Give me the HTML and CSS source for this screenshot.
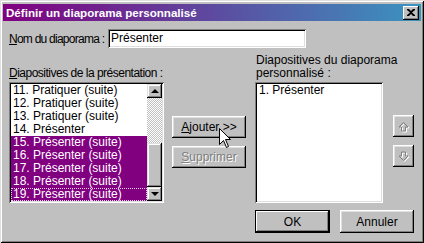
FILE: index.html
```html
<!DOCTYPE html>
<html lang="fr">
<head>
  <meta charset="UTF-8">
  <title>Définir un diaporama personnalisé</title>
  <link rel="stylesheet" href="styles.css">
</head>
<body>
  <div class="window">
    <div class="titlebar">
      <span class="title">Définir un diaporama personnalisé</span>
      <span class="close">
        <svg width="8" height="7" viewBox="0 0 8 7"><path d="M0 0h2l2 2 2-2h2v1L5 3.5 8 6v1H6L4 5 2 7H0V6l3-2.5L0 1z" fill="#000"/></svg>
      </span>
    </div>

    <div class="body">
      <div class="name-row">
        <span class="label"><u>N</u>om du diaporama :</span>
        <div class="field">Présenter</div>
      </div>

      <div class="main">
        <div class="lbl left-lbl"><u>D</u>iapositives de la présentation :</div>
        <div class="lbl right-lbl">Diapositives du diaporama<br>personnalisé :</div>

        <div class="listbox left-list">
          <ul class="items">
            <li>11. Pratiquer (suite)</li>
            <li>12. Pratiquer (suite)</li>
            <li>13. Pratiquer (suite)</li>
            <li>14. Présenter</li>
            <li class="sel">15. Présenter (suite)</li>
            <li class="sel">16. Présenter (suite)</li>
            <li class="sel">17. Présenter (suite)</li>
            <li class="sel">18. Présenter (suite)</li>
            <li class="sel focus">19. Présenter (suite)</li>
          </ul>
          <div class="scrollbar">
            <div class="sb-btn"><span class="tri up"></span></div>
            <div class="sb-track"></div>
            <div class="sb-thumb"></div>
            <div class="sb-btn"><span class="tri down"></span></div>
          </div>
        </div>

        <div class="mid">
          <div class="btn"><span><u>A</u>jouter &gt;&gt;</span></div>
          <div class="btn disabled"><span><u>S</u>upprimer</span></div>
        </div>

        <div class="listbox right-list">
          <ul class="items">
            <li>1. Présenter</li>
          </ul>
        </div>

        <div class="arrows">
          <div class="btn small">
            <svg width="13" height="13" viewBox="0 0 13 13">
              <path d="M6.5 2.5l4.5 4.5H8.5v4h-4v-4H2z" fill="none" stroke="#fff" transform="translate(1 1)"/>
              <path d="M6.5 2.5l4.5 4.5H8.5v4h-4v-4H2z" fill="none" stroke="#808080"/>
            </svg>
          </div>
          <div class="btn small">
            <svg width="13" height="13" viewBox="0 0 13 13">
              <path d="M6.5 10.5L11 6H8.5V2h-4v4H2z" fill="none" stroke="#fff" transform="translate(1 1)"/>
              <path d="M6.5 10.5L11 6H8.5V2h-4v4H2z" fill="none" stroke="#808080"/>
            </svg>
          </div>
        </div>

        <div class="footer">
          <div class="btn default"><span>OK</span></div>
          <div class="btn"><span>Annuler</span></div>
        </div>
      </div>
    </div>

    <svg class="cursor" width="13" height="21" viewBox="0 0 13 21">
      <path d="M0.5 0.5V16.5L4.5 12.5L7.5 19.5L9.5 18.5L6.5 11.5H11.5Z" fill="#fff" stroke="#000"/>
    </svg>
  </div>
</body>
</html>
```

FILE: styles.css
```css
* {
  margin: 0;
  padding: 0;
  box-sizing: border-box;
}

body {
  width: 424px;
  height: 243px;
  overflow: hidden;
  font-family: 'Liberation Sans', Arial, sans-serif;
  font-size: 12px;
  color: #000;
  background: #c0c0c0;
}

u {
  text-decoration: underline;
  text-underline-offset: 1px;
}

.window {
  position: relative;
  width: 424px;
  height: 243px;
  padding: 4px 3px 3px 3px;
  background: #c0c0c0;
  box-shadow: inset 1px 1px #dfdfdf, inset -1px -1px #000, inset 2px 2px #fff, inset -2px -2px #808080;
}

.titlebar {
  height: 17px;
  display: flex;
  align-items: center;
  justify-content: space-between;
  padding: 0 2px 0 3px;
  background: linear-gradient(to right, #800080, #3a94c0);
}

.title {
  color: #fff;
  font-weight: bold;
  font-size: 11.6px;
}

.close {
  width: 16px;
  height: 14px;
  display: flex;
  align-items: center;
  justify-content: center;
  background: #c0c0c0;
  box-shadow: inset -1px -1px #000, inset 1px 1px #fff, inset -2px -2px #808080;
}

.body {
  padding: 0 7px 0 6px;
}

.name-row {
  display: flex;
  align-items: center;
  margin-top: 8px;
  height: 19px;
}

.name-row .label {
  flex: none;
  width: 99px;
  white-space: nowrap;
  letter-spacing: -0.75px;
}

.field {
  flex: none;
  width: 198px;
  height: 19px;
  padding: 2px 3px;
  line-height: 14px;
  background: #fff;
  box-shadow: inset 1px 1px #808080, inset -1px -1px #fff, inset 2px 2px #000, inset -2px -2px #dfdfdf;
}

.main {
  display: grid;
  grid-template-columns: 155px 8px 74px 9px 128px 10px 21px;
  grid-template-rows: 26px 121px 23px;
  row-gap: 2px;
  margin-top: 6px;
}

.lbl {
  line-height: 13px;
  align-self: end;
}

.left-lbl {
  grid-column: 1;
  grid-row: 1;
  white-space: nowrap;
  letter-spacing: -0.5px;
}

.right-lbl {
  grid-column: 5 / 8;
  grid-row: 1;
  padding-left: 1px;
}

.listbox {
  grid-row: 2;
  display: flex;
  padding: 2px;
  background: #fff;
  box-shadow: inset 1px 1px #808080, inset -1px -1px #fff, inset 2px 2px #000, inset -2px -2px #dfdfdf;
}

.left-list {
  grid-column: 1;
}

.right-list {
  grid-column: 5;
}

.items {
  list-style: none;
  flex: 1;
}

.items li {
  height: 13px;
  line-height: 13px;
  padding-left: 2px;
  white-space: nowrap;
}

.items li.sel {
  background: #800080;
  color: #fff;
}

.items li.focus {
  outline: 1px dotted #e8c8e8;
  outline-offset: -1px;
}

.scrollbar {
  width: 15px;
  display: flex;
  flex-direction: column;
}

.sb-btn,
.sb-thumb {
  background: #c0c0c0;
  box-shadow: inset -1px -1px #000, inset 1px 1px #dfdfdf, inset -2px -2px #808080, inset 2px 2px #fff;
}

.sb-btn {
  height: 14px;
  display: flex;
  align-items: center;
  justify-content: center;
}

.sb-track {
  height: 45px;
  background: repeating-conic-gradient(#fff 0 25%, #c0c0c0 0 50%) 0 0 / 2px 2px;
}

.sb-thumb {
  height: 44px;
}

.tri {
  width: 0;
  height: 0;
  border-left: 4px solid transparent;
  border-right: 4px solid transparent;
}

.tri.up {
  border-bottom: 4px solid #000;
}

.tri.down {
  border-top: 4px solid #000;
}

.mid {
  grid-column: 3;
  grid-row: 2;
  display: flex;
  flex-direction: column;
  gap: 8px;
  padding-top: 34px;
}

.arrows {
  grid-column: 7;
  grid-row: 2;
  display: flex;
  flex-direction: column;
  gap: 8px;
  padding-top: 33px;
}

.btn {
  height: 22px;
  display: flex;
  align-items: center;
  justify-content: center;
  background: #c0c0c0;
  box-shadow: inset -1px -1px #000, inset 1px 1px #fff, inset -2px -2px #808080, inset 2px 2px #dfdfdf;
}

.btn.disabled {
  color: #808080;
  text-shadow: 1px 1px #fff;
}

.btn.small {
  width: 21px;
}

.footer {
  grid-column: 5 / 8;
  grid-row: 3;
  display: flex;
  justify-content: space-between;
  margin-top: 5px;
}

.footer .btn {
  width: 74px;
  height: 23px;
}

.footer .btn.default {
  width: 75px;
  box-shadow: inset 0 0 0 1px #000, inset -2px -2px #000, inset 2px 2px #fff, inset -3px -3px #808080;
}

.cursor {
  position: absolute;
  left: 219px;
  top: 128px;
}
```
